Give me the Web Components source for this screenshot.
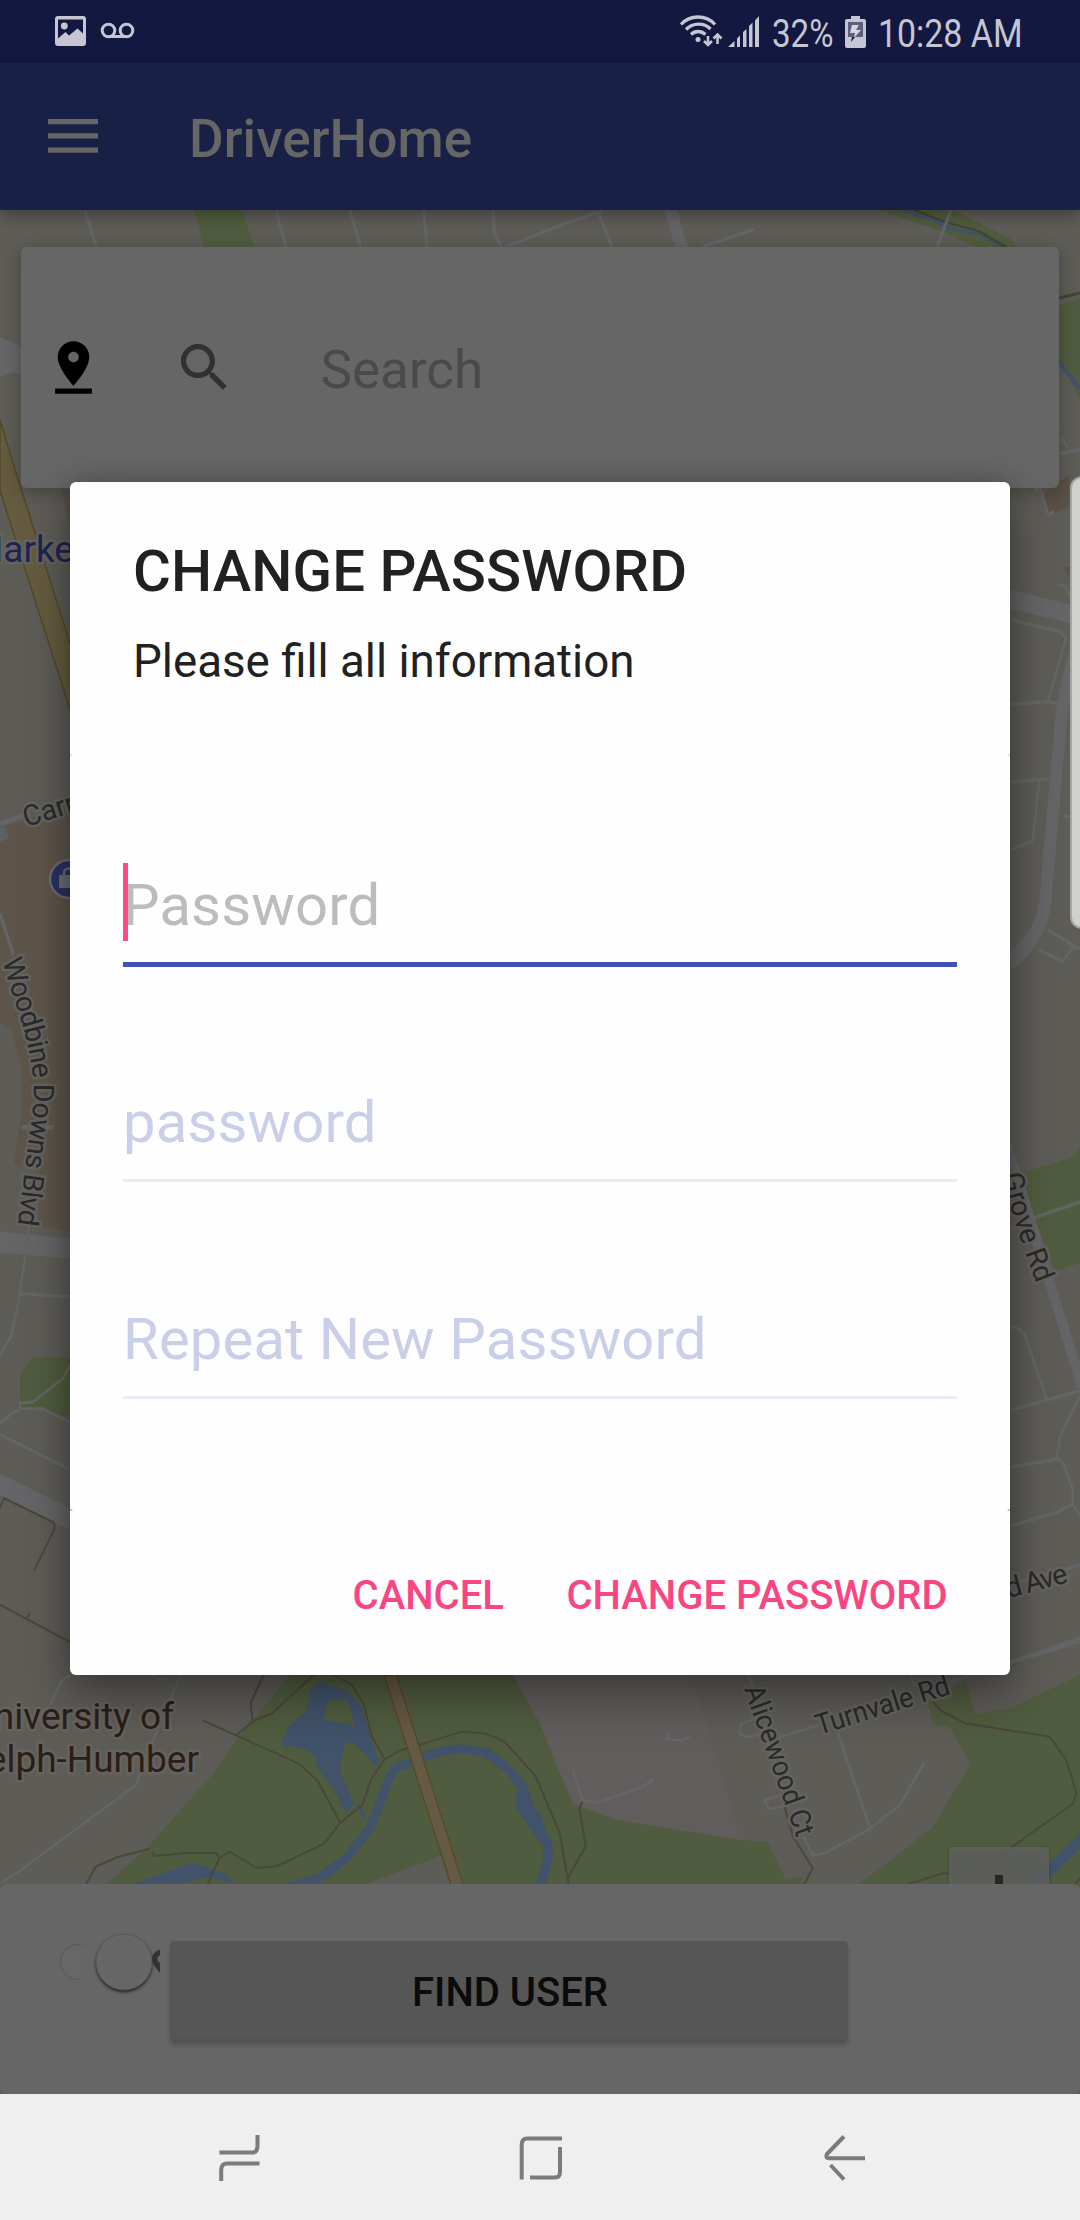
<!DOCTYPE html>
<html lang="en">
<head>
<meta charset="utf-8">
<title>DriverHome</title>
<style>
html,body{margin:0;padding:0}
body{width:1080px;height:2220px;overflow:hidden;background:#5d5b56;font-family:Roboto,"Liberation Sans",sans-serif}
</style>
</head>
<body>
<driver-app></driver-app>
<script>
const define = (name, html) => {
  const t = document.createElement('template');
  t.innerHTML = html;
  customElements.define(name, class extends HTMLElement {
    constructor() {
      super();
      this.attachShadow({ mode: 'open' }).append(t.content.cloneNode(true));
    }
  });
};

define('status-bar', `
<style>
:host{display:flex;height:63px;background:#131840;justify-content:space-between;padding:0 56px 0 48px}
svg{display:block;overflow:visible}
.right{display:flex}
text{font-family:Roboto,"Liberation Sans",sans-serif;font-size:39.5px;fill:#c6c6d2}
</style>
<svg width="100" height="63" viewBox="48 0 100 63">
  <path fill="#c6c6d2" fill-rule="evenodd" d="M58 16h25a3 3 0 0 1 3 3v24a3 3 0 0 1-3 3H58a3 3 0 0 1-3-3V19a3 3 0 0 1 3-3zM58 19.500v19l7.500-6.500 3.500 3.500 8.500-7 5.500 5V19.500z"/>
  <circle cx="64.300" cy="26" r="3.400" fill="#c6c6d2"/>
  <g fill="none" stroke="#c6c6d2" stroke-width="3"><circle cx="108.500" cy="30.500" r="6.300"/><circle cx="126.500" cy="30.500" r="6.300"/><path d="M108.500 36.500h18"/></g>
</svg>
<div class="right">
<svg width="88" height="63" viewBox="676 0 88 63">
  <g fill="none" stroke="#c6c6d2" stroke-width="3.300">
    <path d="M681 24.500C690 14.500 706 14.500 715 24.500M686 29.500C693 22.500 704 22.500 710.500 29M691 34.500C695 30.500 701 30.500 705.500 34.500"/>
    <path stroke-width="2.600" d="M708 36v9M704 41l4 4 4-4M717.500 44v-9M713.500 38.500l4-4 4 4"/>
  </g>
  <circle cx="698" cy="39.500" r="2.500" fill="#c6c6d2"/>
  <path fill="#c6c6d2" d="M728 47l6.500-6v6zM737 38.500l3-3V47h-3zM743 32l3.500-3v18H743zM749 26l3.500-3.500V47H749zM755 20.500l4-4.500v31h-4z"/>
</svg>
<svg width="72" height="63" viewBox="764 0 72 63"><text x="772" y="47" textLength="61.500" lengthAdjust="spacingAndGlyphs">32%</text></svg>
<svg width="40" height="63" viewBox="836 0 40 63">
  <path fill="#c6c6d2" d="M851 16h9v3h4a2 2 0 0 1 2 2v25a2 2 0 0 1-2 2h-17a2 2 0 0 1-2-2V21a2 2 0 0 1 2-2h4z"/>
  <path fill="#5d5f7d" d="M848 22h15v15h-15z"/><path fill="#d6d6df" d="M852 25h7l-3 5h5l-7 8 1-5h-5z"/><path fill="#131840" d="M852 37h3l-4 5z"/>
</svg>
<svg width="148" height="63" viewBox="876 0 148 63"><text x="878" y="47" textLength="144.500" lengthAdjust="spacingAndGlyphs">10:28 AM</text></svg>
</div>`);

define('app-bar', `
<style>
:host{display:flex;position:relative;z-index:1;height:147px;background:#192046;box-shadow:0 6px 14px rgba(0,0,0,.3);align-items:center}
svg{display:block;margin:-2px 0 0 48px}
h1{margin:4px 0 0 91px;font:500 53px/62px Roboto,"Liberation Sans",sans-serif;letter-spacing:.1px;color:#666}
</style>
<svg width="50" height="34" viewBox="0 0 50 34" fill="#666"><path d="M0 0h50v5.200H0zM0 14.300h50v5.200H0zM0 28.600h50v5.200H0z"/></svg>
<h1><slot></slot></h1>`);

define('city-map', `
<style>
:host{display:block;overflow:hidden}
svg{display:block}
text{font-family:Roboto,"Liberation Sans",sans-serif;paint-order:stroke;stroke:#65635f;stroke-width:5px;stroke-linejoin:round}
.st{font-size:28.500px;fill:#2a2a2b}
.r{fill:none;stroke:#656567;stroke-width:9;stroke-linejoin:round}
.p{fill:none;stroke:#4a483a;stroke-width:6}
.g{fill:#505c3f}.w{fill:#41536a}
</style>
<svg width="1080" height="1884" viewBox="0 210 1080 1884">
<rect y="210" width="1080" height="1884" fill="#5e5c57"/>
<!-- northern strip -->
<g transform="translate(0 200) scale(.6887 .3333)">
  <path class="g" d="M282 30H352L369 140H296zM1277 30H1385L1470 120 1475 140H1415L1370 95z"/>
  <path d="M1312 30L1360 62 1378 85 1425 105 1458 140" fill="none" stroke="#41536a" stroke-width="9"/>
  <path d="M1328 30L1375 68 1420 92 1460 140" fill="none" stroke="#45442f" stroke-width="5"/>
</g>
<g class="r" style="stroke-width:3"><path d="M85 210L96 247M276 210L286 247M350 210L361 247M423.500 210L427 247M493 210L494.500 233 501 247M506 247L561 225 596 213 603 210M599 214L612 247M702 247L755 229M951 210L937 247"/><path style="stroke-width:12" d="M670 208L682 249"/></g>
<!-- west side -->
<path fill="#666" d="M0 337L21 346V374L12 373 0 377z"/>
<path d="M0 420L12 460 74 656V722L0 490.600z" fill="#655b40" stroke="#55482a" stroke-width="1.500"/>
<path fill="#5d5248" d="M62 490h20v40H70z"/>
<path fill="#5e554a" d="M0 828L74 805V1232L38 1226 40 1166 14 1164 22 1110V1070L12 1030 0 1022z"/>
<path fill="#5d6062" d="M0 828L6 828 9 838 0 842z"/>
<g transform="translate(0 460) scale(.3333 .5102)"><path class="r" d="M0 713L80 695M0 890L40 970M65 1308H160"/></g>
<g transform="translate(0 1200) scale(.3333 .4464)">
  <path fill="#656565" d="M0 70L230 88V133L0 118z"/>
  <path class="g" d="M60 390L97 353H230V500L130 468 62 475z"/>
  <path fill="#656567" d="M0 613L230 697V747L0 663z"/>
  <path class="r" style="stroke-width:7" d="M90 40L75 130 55 230 33 305 0 348M60 210L220 217M215 365L188 400 100 452 60 455V470M0 500L35 478 65 468 130 468 230 504M0 525L220 608"/>
  <path class="p" style="stroke-width:5" d="M0 690L12 668 163 723V738L102 830M0 907L220 994M80 938L90 925"/>
</g>
<!-- south west park and pond -->
<g transform="translate(0 1640) scale(.3444 .3333)">
  <path class="r" style="stroke-width:7" d="M0 730L60 690 395 435 445 300 525 105M205 103L180 122 145 195M440 105L470 121 490 112"/>
  <path class="g" d="M845 100L680 310 620 400 425 625 305 735H1055L1280 648 1310 735H2330L2330 708 2283 717 2229 605 2155 600 1795 540 1665 493 1622 390 1568 250 1485 100z"/>
  <path class="w" fill-rule="evenodd" d="M928 125L905 140 890 213 835 263 815 312 825 323 850 318 890 330 915 350 922 385 965 440 1005 520 1027 490 988 395 990 360 1002 310 1020 305 1045 325 1090 378 1102 370 1070 270 1050 200 1010 155zM950 183L975 178 1012 185 1030 255 940 240zM385 732L560 668 655 702 680 732 635 718 600 712 520 732zM735 732L765 728V735z"/>
  <path d="M1040 492L1060 533" fill="none" stroke="#41536a" stroke-width="10"/>
  <path d="M840 742L930 712 1005 655 1075 565 1130 415 1150 385 1190 368 1240 348 1290 332 1345 327 1410 337 1475 385 1520 445 1550 540 1590 610 1592 655 1570 735" fill="none" stroke="#41536a" stroke-width="27" stroke-linejoin="round"/>
  <path class="w" d="M1500 450L1497 500 1568 610 1600 620 1568 520z"/>
  <path class="p" d="M765 105L728 190 733 243M910 105L790 220 735 243 685 287M590 242L870 372 923 423 988 548M970 105L1022 135 1055 190 1080 290 1117 358 1078 418 1052 495 988 548 940 612 805 678 745 684 667 635 637 655 628 639 540 639 448 648 441 637M637 655L603 732M435 626L340 652 278 680 250 732M1117 358L1165 330 1215 316 1340 275 1410 280 1465 305 1555 408 1568 440"/>
  <path d="M1115 105L1310 735H1345L1151 105z" fill="#655a43" stroke="#594926" stroke-width="4"/>
</g>
<!-- south east -->
<g transform="translate(540 1640) scale(.3444 .3333)">
  <path fill="#5e5c57" d="M440 100L585 600 660 605 713 717 785 708 792 735H923L1000 675 1137 565 1300 372V100z"/>
  <path fill="#625d5d" d="M-84 100L0 250 55 390 97 493 225 540 585 600 440 100z"/>
  <path class="g" d="M923 735L1000 675 1137 565 1250 372 1190 260 1143 252 1125 185 1235 122 1263 222 1370 203 1570 103V735z"/>
  <path d="M1585 585L1430 742" stroke="#41536a" stroke-width="31"/>
  <path class="r" style="stroke-width:8" d="M605 105L620 150M685 295L810 255M635 235L585 250 578 280 598 291 640 283M865 280L957 560M1117 367L1043 497 957 567 825 640 793 647 765 590M700 465L652 480 665 508 715 497M1075 105L1090 140M1190 125L1250 105M1365 70L1568 5M95 388L123 482 165 488 290 445 330 418M377 280L365 297 412 301 435 292"/>
  <path class="p" d="M0 440L57 578 80 715 133 618 114 505 123 485M80 715L84 732M710 500L735 590 792 685 767 732M1140 185L1165 213 1235 250 1480 290 1527 358 1558 460 1547 492 1255 705 1170 700 1070 732M1570 715L1552 732"/>
</g>
<!-- east side -->
<path d="M1059 298L1080 293" stroke="#454437" stroke-width="3"/>
<path class="g" d="M1059 305L1080 298V400L1059 360z"/><path d="M1057 360L1081 390" stroke="#41536a" stroke-width="4"/>
<text class="st" x="1052" y="446" transform="rotate(-14 1052 446)">r</text>
<g transform="translate(980 430) scale(.3333 .5102)">
  <path fill="#5a5047" d="M215 110L268 88V150L205 168 190 130zM250 268L300 270V330z"/>
  <path class="r" style="stroke-width:7" d="M245 15L262 35M237 47L300 38M162 118L180 115 205 165 222 160M238 302L258 308 268 325M90 372L240 395 258 407 205 530M90 538L205 532 232 536M90 690L208 683M178 687L158 805 90 824M250 757H300M205 980L300 1018M172 1017L247 1042 280 1012"/>
  <path class="r" style="stroke-width:36" d="M80 330L300 365M310 390Q250 500 240 590L195 930Q180 1000 80 1045"/>
</g>
<g transform="translate(980 1100) scale(.3333 .5102)">
  <path class="g" d="M115 146L270 113Q285 108 300 92V320L225 335z"/>
  <path class="r" style="stroke-width:28" d="M82 90L305 560"/>
  <path class="r" style="stroke-width:7" d="M158 232L300 200M90 252L140 242M90 445H110L133 458 200 585M90 608L300 570M300 580L240 660 230 702M90 720L232 703 250 712 278 762V792L300 815M90 836L230 808 278 792M90 950L300 912M90 1102L300 1055"/>
</g>
<!-- labels -->
<text x="-29" y="562" font-size="37" fill="#1e2352">Market</text>
<circle cx="69" cy="879" r="19" fill="#2a3261" stroke="#6b6c70" stroke-width="2.500"/>
<path fill="#6b6c75" d="M59 875h20v13H59z"/><path d="M64 876v-3a4.500 4.500 0 0 1 9 0v3" fill="none" stroke="#6b6c75" stroke-width="2.500"/>
<text class="st" x="26" y="827" transform="rotate(-17 26 827)">Carrier Dr</text>
<path id="wb" d="M2 961L13 996Q29 1040 33 1078Q35 1100 30 1130L17 1230" fill="none"/>
<text class="st"><textPath href="#wb" textLength="269">Woodbine Downs Blvd</textPath></text>
<text x="174" y="1729" font-size="37" fill="#2b1e15" text-anchor="end">University of</text>
<text x="199" y="1772" font-size="37" fill="#2b1e15" text-anchor="end">Guelph-Humber</text>
<text class="st" transform="translate(744 1689) rotate(70.500)" textLength="158" lengthAdjust="spacingAndGlyphs">Alicewood Ct</text>
<text class="st" transform="translate(819 1735) rotate(-17.300)" textLength="139" lengthAdjust="spacingAndGlyphs">Turnvale Rd</text>
<path id="gr" d="M1003 1175Q1011 1218 1039 1290" fill="none"/>
<text class="st"><textPath href="#gr">Grove Rd</textPath></text>
<text class="st" text-anchor="end" transform="translate(1069 1582) rotate(-15)" textLength="63">d Ave</text>
<!-- zoom control -->
<rect x="949" y="1847" width="100" height="100" rx="4" fill="#666" fill-opacity=".75" style="filter:drop-shadow(0 1px 2px rgba(0,0,0,.3))"/>
<path fill="#262626" d="M995 1875h8v28h-8z"/>
</svg>`);

define('search-card', `
<style>
:host{display:flex;height:241px;margin:37px 21px 0;box-sizing:border-box;border-radius:6px;background:#666;box-shadow:0 4px 18px rgba(0,0,0,.3);padding:89px 0 0 21px}
svg{display:block;width:63px;height:63px}
svg+svg{margin-left:68px}
span{font-size:53px;line-height:62px;color:#4a4a4a;margin:3px 0 0 84.5px}
</style>
<svg viewBox="0 0 24 24"><path d="M18 8c0-3.310-2.690-6-6-6S6 4.690 6 8c0 4.500 6 11 6 11s6-6.500 6-11zm-8 0c0-1.100.9-2 2-2s2 .9 2 2-.89 2-2 2c-1.100 0-2-.9-2-2zM5 20v2h14v-2H5z"/></svg>
<svg viewBox="0 0 24 24" fill="#313131"><path d="M15.500 14h-.79l-.28-.27C15.410 12.590 16 11.110 16 9.500 16 5.910 13.090 3 9.500 3S3 5.910 3 9.500 5.910 16 9.500 16c1.610 0 3.090-.59 4.230-1.570l.27.28v.79l5 4.990L20.490 19l-4.990-5zm-6 0C7.010 14 5 11.990 5 9.500S7.010 5 9.500 5 14 7.010 14 9.500 11.990 14 9.500 14z"/></svg>
<span><slot></slot></span>`);

define('action-card', `
<style>
:host{display:flex;height:210px;box-sizing:border-box;border-radius:7px;background:#666}
svg{display:block}
button{all:unset;box-sizing:border-box;width:678px;height:98px;margin:57px 0 0 10px;border-radius:4px;background:#565656;box-shadow:0 6px 5px rgba(0,0,0,.2);color:#0b0b0b;font:500 40px/47px Roboto,"Liberation Sans",sans-serif;text-align:center;padding:4px 0 0 2px}
</style>
<svg width="160" height="210" viewBox="0 0 160 210">
  <path d="M100 60.500H78M78 95.500H100" stroke="#626262"/>
  <path d="M78 60.500a17.500 17.500 0 0 0 0 35" fill="#676767" stroke="#565656"/>
  <path fill="#333" d="M162.500 65.500c-6 0-10.500 4.200-10.500 9.500 0 4.500 4 9.500 10.500 17z"/>
  <circle cx="161.500" cy="75" r="4" fill="#666"/>
  <circle cx="124" cy="78" r="28" fill="#666" stroke="#555" stroke-width=".8" style="filter:drop-shadow(0 2px 1.500px rgba(0,0,0,.6))"/>
</svg>
<button><slot></slot></button>`);

define('nav-bar', `
<style>:host{display:block;height:126px;background:#efefef}svg{display:block}</style>
<svg width="1080" height="126" viewBox="0 2094 1080 126" fill="none" stroke="#7b7b7b" stroke-width="4">
<path d="M257.500 2135V2146Q257.500 2152.500 252 2152.500H219.500M259.500 2163.500H227Q221.200 2163.500 221.200 2170V2181"/>
<path d="M562 2138.500H527Q521.700 2138.500 521.700 2145V2179.500M560 2147V2172Q560 2177.500 555 2177.500H530"/>
<path d="M844 2136.500L827 2154Q825 2158.200 829 2158.200H865M830.500 2165L844 2179.500"/>
</svg>`);

define('text-field', `
<style>
:host{display:block;position:relative;padding-bottom:23px;border-bottom:3px solid #e8eaf5;color:#c9cfe9;font-size:58px;line-height:68px;letter-spacing:.14px}
:host([focused]){border-bottom:5px solid #3f51b5;color:#bcbcbc}
i{display:none;position:absolute;left:0;top:-8px;width:5px;height:78px;background:#ff4081;opacity:.95}
:host([focused]) i{display:block}
</style>
<slot></slot><i></i>`);

define('password-dialog', `
<style>
:host{display:block;position:absolute;z-index:3;left:70px;top:482px;width:940px;height:1193px;border-radius:6px;background:#fefefe;box-shadow:0 22px 50px rgba(0,0,0,.35),0 0 22px rgba(0,0,0,.2);color:#212121}
header{height:272px;box-sizing:border-box;padding:55px 63px 0}
h2{margin:0;font:500 58px/68px Roboto,"Liberation Sans",sans-serif;letter-spacing:.1px;white-space:nowrap}
p{margin:30px 0 0;font-size:45.7px;line-height:54px;white-space:nowrap}
section{height:757px;box-sizing:border-box;padding:117px 53px 0;display:flex;flex-direction:column;background:radial-gradient(circle at 6px 6px,transparent 6px,#ddd 7px) 0 0/6px 6px no-repeat,radial-gradient(circle at 0 6px,transparent 6px,#ddd 7px) 100% 0/6px 6px no-repeat,radial-gradient(circle at 6px 0,transparent 6px,#bbb 7px) 0 100%/6px 6px no-repeat,radial-gradient(circle at 0 0,transparent 6px,#bbb 7px) 100% 100%/6px 6px no-repeat}
text-field:nth-child(2){margin-top:121px}
text-field:nth-child(3){margin-top:123px}
footer{display:flex;justify-content:flex-end;gap:62.5px;padding:61px 62.5px 0;font:500 40px/47px Roboto,"Liberation Sans",sans-serif;color:#f94682;white-space:nowrap}
</style>
<header><h2>CHANGE PASSWORD</h2><p>Please fill all information</p></header>
<section>
  <text-field focused>Password</text-field>
  <text-field>password</text-field>
  <text-field>Repeat New Password</text-field>
</section>
<footer><span>CANCEL</span><span>CHANGE PASSWORD</span></footer>`);

define('edge-handle', `
<style>:host{display:block;position:absolute;z-index:4;left:1069.5px;top:476px;width:30px;height:453px;box-sizing:border-box;border:2px solid #a5a5a3;border-radius:12px;background:#d0d0ce}</style>`);

define('driver-app', `
<style>
:host{display:flex;flex-direction:column;position:relative;width:1080px;height:2220px;overflow:hidden}
main{display:grid;height:1884px;grid-template:1884px/1080px}
city-map,.over{grid-area:1/1}
.over{position:relative;display:flex;flex-direction:column;justify-content:space-between}
</style>
<status-bar></status-bar>
<app-bar>DriverHome</app-bar>
<main><city-map></city-map><div class="over"><search-card>Search</search-card><action-card>FIND USER</action-card></div></main>
<nav-bar></nav-bar>
<password-dialog></password-dialog>
<edge-handle></edge-handle>`);
</script>
</body>
</html>
